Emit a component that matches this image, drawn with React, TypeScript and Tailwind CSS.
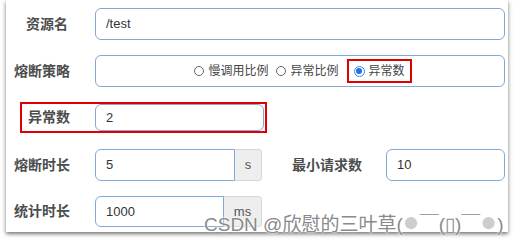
import React from "react";

const font = { fontFamily: '"Liberation Sans", "Noto Sans CJK SC", sans-serif' };

function Label({ text, w }: { text: string; w: string }) {
  return <div className={`${w} shrink-0 text-right text-[14px] font-bold text-[#4d4d4d]`}>{text}</div>;
}

function Radio({ label, checked }: { label: string; checked?: boolean }) {
  return (
    <div className="flex items-center gap-[4px]">
      {checked ? (
        <span className="flex h-[11px] w-[11px] items-center justify-center rounded-full border border-[#3b86e8] bg-white">
          <span className="h-[6px] w-[6px] rounded-full bg-[#1a73e8]" />
        </span>
      ) : (
        <span className="h-[10px] w-[10px] rounded-full border border-[#666]" />
      )}
      <span className="text-[12px] text-[#444]">{label}</span>
    </div>
  );
}

export default function App() {
  return (
    <div className="relative h-[247px] w-[521px] overflow-hidden bg-white" style={font}>
      <div className="ml-[6px] h-[232px] w-[502px] bg-white pt-[8px] shadow-[0_2px_4px_rgba(0,0,0,0.55)]">
        {/* 资源名 */}
        <div className="flex h-[32px] items-center">
          <Label text="资源名" w="w-[62px]" />
          <div className="ml-[27px] flex h-[32px] w-[410px] items-center rounded-[6px] border border-[#7fa9d8] pl-[10px] text-[13px] text-[#333]">
            /test
          </div>
        </div>

        {/* 熔断策略 */}
        <div className="mt-[15px] flex h-[32px] items-center">
          <Label text="熔断策略" w="w-[64px]" />
          <div className="ml-[25px] flex h-[32px] w-[410px] items-center justify-center gap-[8px] rounded-[6px] border border-[#7fa9d8] pl-[6px]">
            <Radio label="慢调用比例" />
            <Radio label="异常比例" />
            <div className="flex h-[24px] items-center border-2 border-[#e00000] px-[5px]">
              <Radio label="异常数" checked />
            </div>
          </div>
        </div>

        {/* 异常数 */}
        <div className="ml-[14px] mt-[15px] flex h-[31px] w-[247px] items-center border-2 border-[#e00000]">
          <Label text="异常数" w="w-[48px]" />
          <div className="ml-[25px] flex h-[27px] w-[169px] items-center rounded-[6px] border border-[#7fa9d8] pl-[10px] text-[13px] text-[#333]">
            2
          </div>
        </div>

        {/* 熔断时长 / 最小请求数 */}
        <div className="mt-[16px] flex h-[32px] items-center">
          <Label text="熔断时长" w="w-[64px]" />
          <div className="ml-[25px] flex h-[32px]">
            <div className="flex w-[140px] items-center rounded-l-[6px] border border-[#7fa9d8] pl-[10px] text-[13px] text-[#333]">
              5
            </div>
            <div className="flex w-[27px] items-center justify-center rounded-r-[4px] border border-l-0 border-[#d6d6d6] bg-[#eeeeee] text-[13px] text-[#555]">
              s
            </div>
          </div>
          <Label text="最小请求数" w="w-[100px]" />
          <div className="ml-[24px] flex h-[32px] w-[119px] items-center rounded-[6px] border border-[#7fa9d8] pl-[10px] text-[13px] text-[#333]">
            10
          </div>
        </div>

        {/* 统计时长 */}
        <div className="mt-[15px] flex h-[31px] items-center">
          <Label text="统计时长" w="w-[64px]" />
          <div className="ml-[25px] flex h-[31px]">
            <div className="flex w-[129px] items-center rounded-l-[6px] border border-[#7fa9d8] pl-[10px] text-[13px] text-[#333]">
              1000
            </div>
            <div className="flex w-[38px] items-center justify-center rounded-r-[4px] border border-l-0 border-[#d6d6d6] bg-[#eeeeee] text-[13px] text-[#555]">
              ms
            </div>
          </div>
        </div>
      </div>

      {/* watermark */}
      <div className="absolute left-[204px] top-[212px] flex h-[26px] items-center whitespace-nowrap text-[19px] leading-[26px] text-[#8a8a8a] [text-shadow:0_0_2px_#fff,0_0_2px_#fff]">
        CSDN @欣慰的三叶草(<span className="inline-block -translate-y-[3px] text-[28px] leading-[20px] text-[#cdcdcd]">●</span>￣(▯)￣<span className="inline-block -translate-y-[3px] text-[28px] leading-[20px] text-[#cdcdcd]">●</span>)
      </div>
    </div>
  );
}
